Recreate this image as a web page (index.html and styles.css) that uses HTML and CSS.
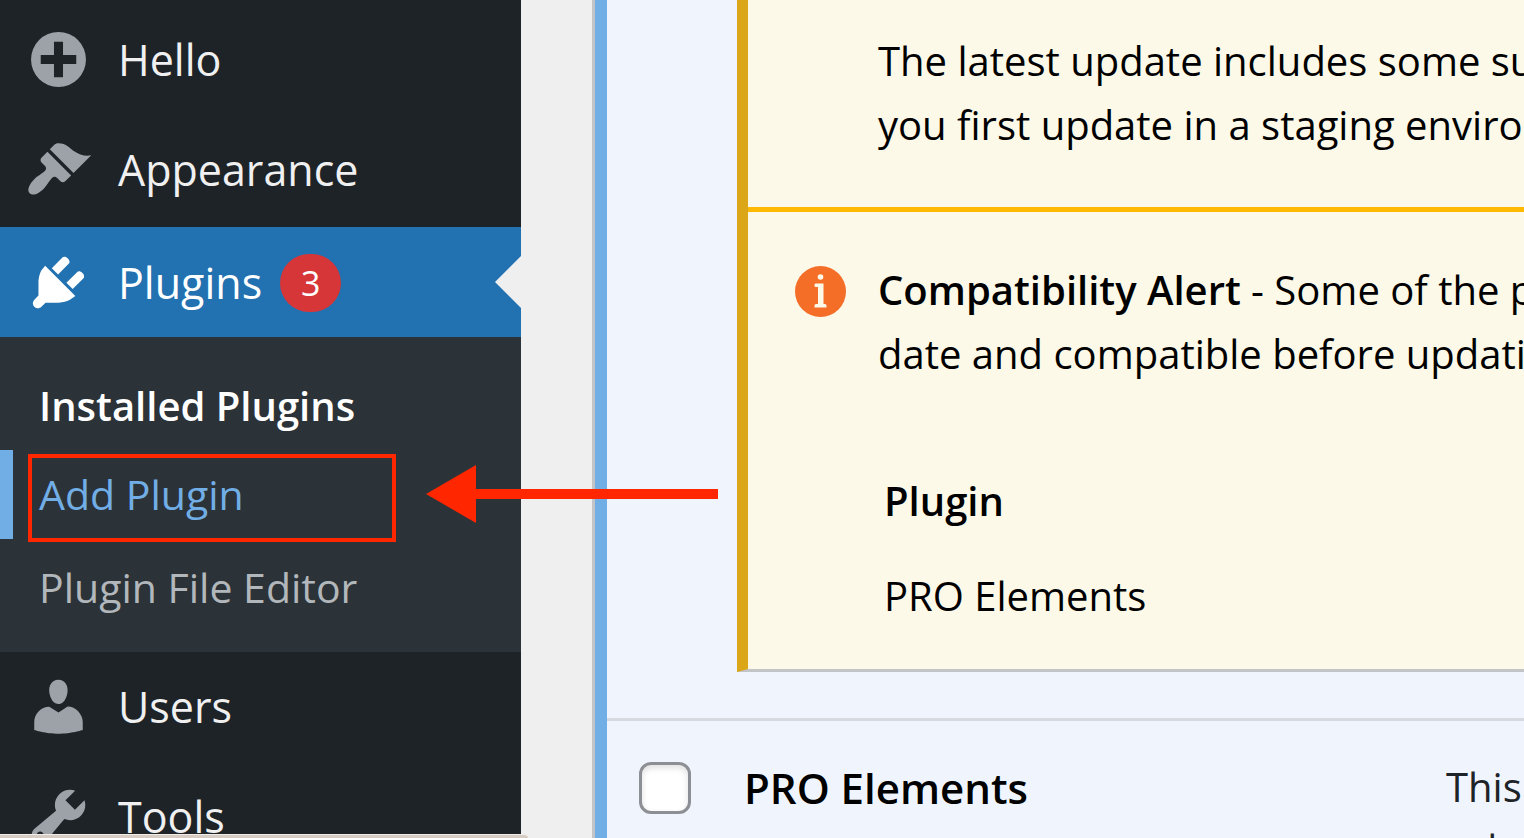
FILE: index.html
```html
<!DOCTYPE html>
<html lang="en">
<head>
<meta charset="utf-8">
<title>Plugins</title>
<link rel="stylesheet" href="styles.css">
</head>
<body>
<nav class="sidebar">
  <ul class="menu">
    <li><a class="menu-link" href="#">
      <svg class="icon" viewBox="0 0 20 20"><path fill-rule="evenodd" d="M10 1.8a8.2 8.2 0 1 1 0 16.4 8.2 8.2 0 0 1 0-16.4zM8.65 4.7v3.95H4.7v2.7h3.95v3.95h2.7v-3.95h3.95v-2.7h-3.95V4.7z"/></svg>
      <span>Hello</span></a></li>
    <li><a class="menu-link" href="#">
      <svg class="icon" viewBox="0 0 20 20"><path d="M14.48 11.06L7.41 3.99l1.5-1.5c.5-.56 2.3-.47 3.51.32 1.21.8 1.43 1.28 2.91 2.1 1.18.64 2.45 1.26 4.45.85zm-.71.71L6.7 4.7 4.93 6.47c-.39.39-.39 1.02 0 1.41l1.06 1.06c.39.39.39 1.03 0 1.42-.6.6-1.43 1.11-2.21 1.69-.35.26-.7.53-1.01.84C1.43 14.23.4 16.08 1.4 17.07c.99 1 2.84-.03 4.18-1.36.31-.31.58-.66.85-1.02.57-.78 1.08-1.61 1.69-2.21.39-.39 1.02-.39 1.41 0l1.06 1.06c.39.39 1.02.39 1.41 0z"/></svg>
      <span>Appearance</span></a></li>
    <li><a class="menu-link current" href="#">
      <svg class="icon" viewBox="0 0 20 20"><path d="M13.11 4.36L9.87 7.6 8 5.73l3.24-3.24c.35-.34 1.05-.2 1.56.32.52.51.66 1.21.31 1.55zm-8 1.77l.91-1.12 9.01 9.01-1.19.84c-.71.71-2.63 1.16-3.82 1.16H6.14L4.9 17.26c-.59.59-1.54.59-2.12 0-.59-.58-.59-1.53 0-2.12l1.24-1.24v-3.88c0-1.13.4-3.19 1.09-3.89zm7.26 3.97l3.24-3.24c.34-.35 1.04-.21 1.55.31.52.51.66 1.21.31 1.55l-3.24 3.25z"/></svg>
      <span>Plugins</span><span class="badge">3</span></a>
      <ul class="submenu">
        <li><a class="sub-link active" href="#">Installed Plugins</a></li>
        <li class="focused"><a class="sub-link" href="#">Add Plugin</a>
          <span class="highlight"></span>
          <svg class="arrow" viewBox="0 0 292 58"><path d="M0 29 50 0v24h242v10H50v24z"/></svg>
        </li>
        <li class="last"><a class="sub-link" href="#">Plugin File Editor</a></li>
      </ul></li>
    <li><a class="menu-link" href="#">
      <svg class="icon" viewBox="0 0 20 20"><path d="M10 9.25c-2.27 0-2.73-3.44-2.73-3.44C7 4.02 7.82 2 9.97 2c2.16 0 2.98 2.02 2.71 3.81 0 0-.41 3.44-2.68 3.44zm0 2.57L12.72 10c2.39 0 4.52 2.33 4.52 4.53v2.49s-3.65 1.13-7.24 1.13c-3.65 0-7.24-1.13-7.24-1.13v-2.49c0-2.25 1.94-4.48 4.47-4.48z"/></svg>
      <span>Users</span></a></li>
    <li><a class="menu-link" href="#">
      <svg class="icon" viewBox="0 0 20 20"><path d="M16.68 9.77c-1.34 1.34-3.3 1.67-4.95.99l-5.41 6.52c-.99.99-2.59.99-3.58 0s-.99-2.59 0-3.57l6.52-5.42c-.68-1.65-.35-3.61.99-4.95 1.28-1.28 3.12-1.62 4.72-1.06l-2.89 2.89 2.82 2.82 2.86-2.87c.53 1.58.18 3.39-1.08 4.65zM3.81 16.21c.4.39 1.04.39 1.43 0 .4-.4.4-1.04 0-1.43-.39-.4-1.03-.4-1.43 0-.39.39-.39 1.03 0 1.43z"/></svg>
      <span>Tools</span></a></li>
  </ul>
</nav>
<main class="content">
  <div class="plugins">
    <div class="update-row">
      <section class="notice">
        <p class="intro">The latest update includes some substantial<br>you first update in a staging environment</p>
        <div class="alert">
          <svg class="info" viewBox="0 0 51 51"><circle cx="25.500" cy="25.500" r="25.500"/><g class="mark"><circle cx="25.500" cy="11" r="2.800"/><path d="M20.500 17.500h8V38h1.500q1.500 0 1.500 1.500v2h-12v-2q0-1.500 1.500-1.500h2V21h-2.500q-1 0-1-1.500 0-2 1-2z"/></g></svg>
          <div class="alert-body">
            <p><strong>Compatibility Alert</strong> - Some of the plugins<br>date and compatible before updating</p>
            <table class="compat">
              <thead><tr><th scope="col">Plugin</th></tr></thead>
              <tbody><tr><td>PRO Elements</td></tr></tbody>
            </table>
          </div>
        </div>
      </section>
    </div>
    <div class="plugin-row">
      <input class="check" type="checkbox" id="pro-elements">
      <label class="name" for="pro-elements">PRO Elements</label>
      <p class="desc">This<br>ask</p>
    </div>
  </div>
</main>
<div class="status"></div>
</body>
</html>
```
FILE: styles.css
```css
* { box-sizing: border-box; }

body {
  margin: 0;
  display: flex;
  height: 100vh;
  overflow: hidden;
  position: relative;
  background: #efefef;
  color: #000;
  font-family: "Open Sans", "Noto Sans", sans-serif;
  font-size: 40px;
  line-height: 64px;
}

p, ul { margin: 0; padding: 0; }
ul { list-style: none; }
a { text-decoration: none; }

.sidebar {
  flex: 0 0 521px;
  position: relative;
  z-index: 1;
  background: #1d2327;
}

.menu { padding-top: 5px; }

.menu-link {
  position: relative;
  display: flex;
  align-items: center;
  height: 110px;
  padding-left: 25px;
  font-size: 43px;
  color: #f0f0f1;
}

.icon {
  width: 67px;
  height: 67px;
  margin: 0 26px 2px 0;
  fill: #9ca2a7;
}

.current {
  height: 112px;
  padding-top: 2px;
  border-top: 2px solid #1d2327;
  background: #2271b1;
  color: #fff;
}

.current .icon { fill: #fff; }

.current::after {
  content: "";
  position: absolute;
  right: 0;
  top: 29px;
  border: 26px solid transparent;
  border-left: 0;
  border-right-color: #efefef;
}

.badge {
  min-width: 61px;
  margin-left: 18px;
  border-radius: 29px;
  background: #d63638;
  font-size: 34px;
  line-height: 58px;
  text-align: center;
}

.submenu {
  padding: 24px 0 20px;
  background: #2c3338;
}

.sub-link {
  display: block;
  padding-left: 39px;
  font-size: 41px;
  line-height: 89px;
  color: #b2b7bb;
}

.active {
  font-size: 40px;
  font-weight: 600;
  color: #fff;
}

.focused {
  position: relative;
  box-shadow: inset 13px 0 0 #72aee6;
}

.focused .sub-link { color: #72aee6; }

.last { padding-top: 4px; }

.highlight {
  position: absolute;
  left: 28px;
  top: 4px;
  width: 368px;
  height: 88px;
  border: 4px solid #ff2600;
}

.arrow {
  position: absolute;
  left: 426px;
  top: 15px;
  width: 292px;
  height: 58px;
  fill: #ff2600;
}

.content {
  flex: 1;
  min-width: 0;
  padding-left: 71px;
}

.plugins {
  height: 100%;
  overflow: hidden;
  border-left: 3px solid #c3c4c7;
  background: #f0f5fd;
  box-shadow: inset 12px 0 0 #72aee6;
  padding-left: 12px;
  white-space: nowrap;
}

.update-row {
  padding: 0 0 46px 130px;
  border-bottom: 3px solid #d7dbe1;
}

.notice {
  overflow: hidden;
  border-left: 11px solid #dba617;
  border-bottom: 3px solid #c3c4c7;
  background: #fcf9e8;
}

.intro {
  padding: 29px 0 50px 130px;
  border-bottom: 5px solid #ffb900;
}

.alert {
  display: flex;
  gap: 32px;
  padding: 46px 0 41px 47px;
}

.info {
  flex: none;
  width: 51px;
  height: 51px;
  margin-top: 8px;
  fill: #f56e28;
}

.mark { fill: #fcf9e8; }

strong { font-weight: 600; }

.compat {
  margin: 83px 0 0 6px;
  border-collapse: collapse;
}

.compat th {
  padding: 0 0 31px;
  font-weight: 600;
  text-align: left;
}

.compat td { padding: 0; }

.plugin-row {
  display: grid;
  grid-template-columns: 105px 702px 1fr;
  align-items: start;
  padding: 35px 0 0 32px;
}

.check {
  appearance: none;
  width: 52px;
  height: 52px;
  margin: 6px 0 0;
  border: 3px solid #8c8f94;
  border-radius: 12px;
  background: #fff;
  box-shadow: inset 0 3px 6px #e0e0e0;
}

.name {
  font-size: 42px;
  font-weight: 600;
}

.desc {
  line-height: 62px;
  color: #1d2327;
}

.status {
  position: absolute;
  z-index: 2;
  left: 0;
  bottom: 0;
  width: 528px;
  height: 4px;
  border-radius: 0 4px 0 0;
  border-top: 1px solid #f2ece6;
  background: #d6ccc3;
}
```
